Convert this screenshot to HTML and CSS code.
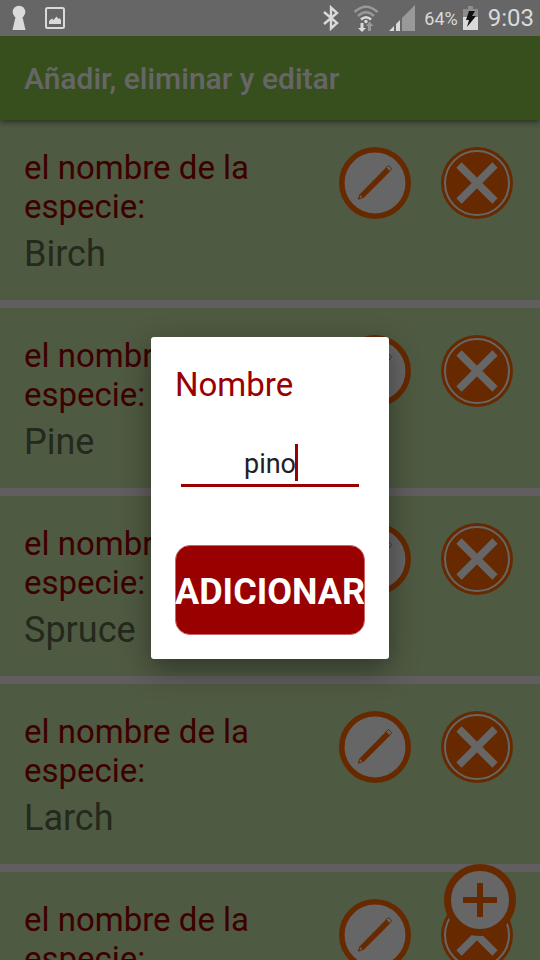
FILE: index.html
```html
<!DOCTYPE html>
<html lang="es">
<head>
<meta charset="utf-8">
<meta name="viewport" content="width=device-width, initial-scale=1">
<title>Añadir, eliminar y editar</title>
<link rel="stylesheet" href="styles.css">
</head>
<body>
<svg class="sprite" aria-hidden="true">
  <symbol id="edit" viewBox="0 0 72 72">
    <circle cx="36" cy="36" r="33.2" fill="#fff" stroke="#f60" stroke-width="5.5"/>
    <path d="M20.500 47.500 47 20.500 51 24.500 24.500 51Z" fill="#f60"/>
    <path d="M47 20.500 49.500 18.500 52.500 21.500 50.500 24.500Z" fill="#fff" stroke="#f60"/>
    <path d="M21 47.500 19.500 52 24 50.500Z" fill="#fff" stroke="#f60"/>
    <path d="M18.800 52.700 19.700 50 21.500 51.800Z" fill="#f60"/>
  </symbol>
  <symbol id="remove" viewBox="0 0 72 72">
    <circle cx="36" cy="36" r="36" fill="#f60"/>
    <circle cx="36" cy="36" r="32" fill="none" stroke="#fff" stroke-width="2"/>
    <path d="M18 18 54 54M54 18 18 54" stroke="#fff" stroke-width="7.500"/>
  </symbol>
  <symbol id="add" viewBox="0 0 72 72">
    <circle cx="36" cy="36" r="32.500" fill="#fff" stroke="#f60" stroke-width="7"/>
    <path d="M36 19V53M19 36H53" stroke="#f60" stroke-width="6"/>
  </symbol>
</svg>

<div class="status">
  <svg class="keyhole" width="14" height="26" viewBox="0 0 14 26"><circle cx="7" cy="7" r="6.300"/><path d="M4 10H10L13.500 25H.5Z"/></svg>
  <svg class="image" width="20" height="22" viewBox="0 0 20 22"><rect x="1" y="1" width="18" height="20" rx="1.500" fill="none" stroke="#dadada" stroke-width="2"/><path d="M4 17V14L7 11.500 8.500 13 11.500 9.500 13.500 12 14.500 11 16 13V17Z"/></svg>
  <svg class="bluetooth" width="18" height="26" viewBox="0 0 18 26"><path d="M2 7 15 18 9 23.500V2.500L15 8 2 19" fill="none" stroke="#dadada" stroke-width="2.400"/></svg>
  <svg class="wifi" width="26" height="27" viewBox="0 0 26 27">
    <g fill="none" stroke-width="2.500"><path d="M1.500 7Q13-3.500 24.500 7M5 11Q13 3.500 21 11" stroke="#999"/><path d="M8 14.500Q13 10 18 14.500" stroke="#dadada"/></g>
    <circle cx="13" cy="16.500" r="1.700"/><path d="M7.500 18H10.500V23H13L9 27 5 23H7.500Z"/><path d="M15 26V21H13L16.500 16.500 20.500 21H18V26Z" fill="#999"/>
  </svg>
  <svg class="signal" width="26" height="26" viewBox="0 0 26 26"><path d="M0 26 5 21V26ZM7 19 11 15V26H7Z"/><path d="M13 13 26 0V26H13Z" fill="#999"/></svg>
  <span class="percent">64%</span>
  <svg class="battery" width="15" height="24" viewBox="0 0 15 24"><path d="M0 3H5V0H10V3H15V11H0Z" fill="#8d8d8d"/><path d="M0 11H15V24H0Z"/><path d="M6 5H12L9 10H13L4 21 6 14H3Z" fill="#111"/></svg>
  <time class="clock">9:03</time>
</div>

<div class="screen">
  <header class="bar"><h1>Añadir, eliminar y editar</h1></header>
  <main class="list">
    <article class="row"><div class="text"><p class="label">el nombre de la especie:</p><p class="name">Birch</p></div><button class="round" aria-label="Editar"><svg><use href="#edit"/></svg></button><button class="round" aria-label="Eliminar"><svg><use href="#remove"/></svg></button></article>
    <article class="row"><div class="text"><p class="label">el nombre de la especie:</p><p class="name">Pine</p></div><button class="round" aria-label="Editar"><svg><use href="#edit"/></svg></button><button class="round" aria-label="Eliminar"><svg><use href="#remove"/></svg></button></article>
    <article class="row"><div class="text"><p class="label">el nombre de la especie:</p><p class="name">Spruce</p></div><button class="round" aria-label="Editar"><svg><use href="#edit"/></svg></button><button class="round" aria-label="Eliminar"><svg><use href="#remove"/></svg></button></article>
    <article class="row"><div class="text"><p class="label">el nombre de la especie:</p><p class="name">Larch</p></div><button class="round" aria-label="Editar"><svg><use href="#edit"/></svg></button><button class="round" aria-label="Eliminar"><svg><use href="#remove"/></svg></button></article>
    <article class="row"><div class="text"><p class="label">el nombre de la especie:</p></div><button class="round" aria-label="Editar"><svg><use href="#edit"/></svg></button><button class="round" aria-label="Eliminar"><svg><use href="#remove"/></svg></button></article>
  </main>
  <button class="round fab" aria-label="Añadir"><svg><use href="#add"/></svg></button>

  <div class="scrim">
    <form class="dialog">
      <label for="nombre">Nombre</label>
      <div class="field"><input id="nombre" type="text" value="pino"><span class="caret"></span></div>
      <button class="submit" type="button">ADICIONAR</button>
    </form>
  </div>
</div>
</body>
</html>
```

FILE: styles.css
```css
* { box-sizing: border-box; }

body {
  margin: 0;
  height: 100vh;
  display: flex;
  flex-direction: column;
  overflow: hidden;
  font-family: Roboto, sans-serif;
}

h1, p { margin: 0; }

button {
  padding: 0;
  border: 0;
  background: none;
  font-family: inherit;
}

.sprite {
  position: absolute;
  width: 0;
  height: 0;
}

.status {
  flex: none;
  display: flex;
  align-items: center;
  height: 36px;
  padding: 0 6px 0 12px;
  background: #666;
  color: #dadada;
  fill: #dadada;
}

.image { margin-left: 19px; }
.bluetooth { margin-left: auto; }
.wifi { margin-left: 13px; }
.signal { margin-left: 10px; }
.percent { margin-left: 9px; font-size: 18px; }
.battery { margin-left: 5px; }
.clock { margin-left: 10px; font-size: 24px; }

.screen {
  position: relative;
  flex: 1;
  min-height: 0;
  display: flex;
  flex-direction: column;
  overflow: hidden;
  background: #f2ecee;
}

.bar {
  position: relative;
  flex: none;
  display: flex;
  align-items: center;
  height: 84px;
  padding: 0 24px;
  background: #8bc34a;
  box-shadow: 0 2px 6px rgba(0, 0, 0, .5);
}

.bar h1 {
  color: #fff;
  font-size: 30px;
  font-weight: 500;
}

.list {
  display: flex;
  flex-direction: column;
  gap: 8px;
}

.row {
  display: flex;
  align-items: flex-start;
  gap: 30px;
  min-height: 180px;
  padding: 27px 27px 20px 24px;
  background: #c5e1a5;
}

.text {
  flex: 1;
  padding-top: 1px;
}

.label {
  max-width: 240px;
  color: #900;
  font-size: 33px;
  line-height: 39px;
}

.name {
  margin-top: 7px;
  color: #5b674c;
  font-size: 36px;
  line-height: 42px;
}

.round {
  flex: none;
  width: 72px;
  height: 72px;
  border-radius: 50%;
}

.round svg {
  display: block;
  width: 100%;
  height: 100%;
}

.fab {
  position: absolute;
  right: 24px;
  bottom: 24px;
}

.scrim {
  position: absolute;
  inset: 0;
  display: flex;
  align-items: center;
  justify-content: center;
  background: rgba(0, 0, 0, .6);
}

.dialog {
  display: flex;
  flex-direction: column;
  padding: 24px;
  border-radius: 3px;
  background: #fff;
  box-shadow: 0 10px 30px rgba(0, 0, 0, .4);
}

.dialog label {
  color: #900;
  font-size: 33px;
  line-height: 48px;
}

.field {
  position: relative;
  width: 178px;
  margin: 32px auto 58px;
}

.field input {
  display: block;
  width: 100%;
  height: 46px;
  padding: 3px 0 0;
  border: 0;
  border-bottom: 3px solid #900;
  border-radius: 0;
  background: none;
  outline: none;
  color: #212121;
  font-family: inherit;
  font-size: 27px;
  text-align: center;
}

.caret {
  position: absolute;
  top: 3px;
  left: calc(50% + 25px);
  width: 3px;
  height: 37px;
  background: #900;
}

.submit {
  display: flex;
  align-items: center;
  justify-content: center;
  width: 190px;
  height: 90px;
  padding-top: 4px;
  border: 1px solid #c66;
  border-radius: 15px;
  background: #900;
  color: #fff;
  font-size: 36px;
  font-weight: 700;
  white-space: nowrap;
}
```
